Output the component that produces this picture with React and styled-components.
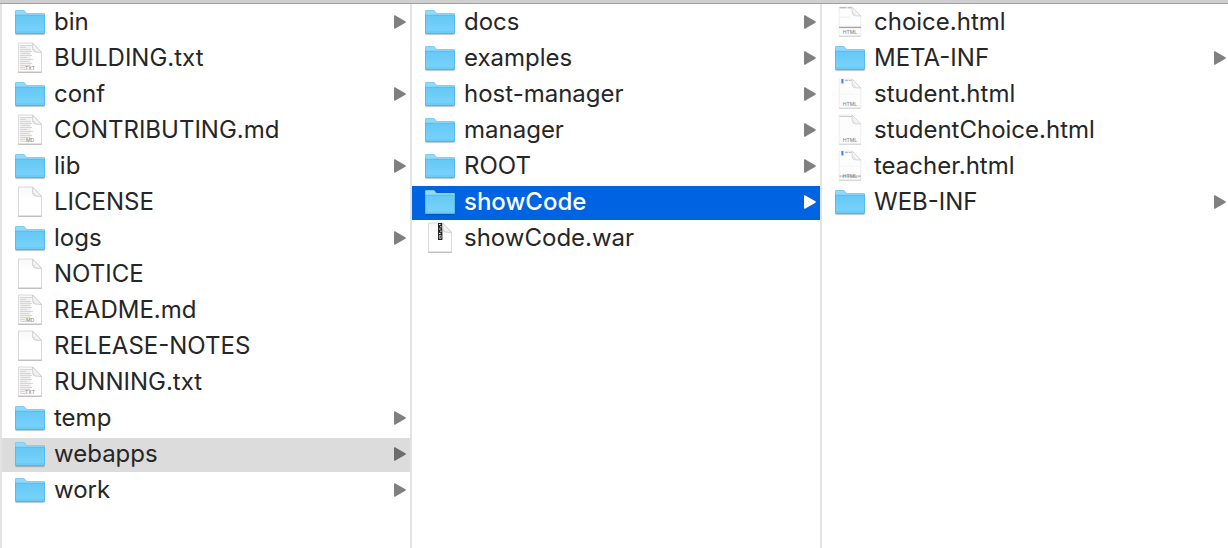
import React from "react";
import styled, { createGlobalStyle } from "styled-components";

const GlobalStyle = createGlobalStyle`
  * { box-sizing: border-box; }
  html, body, #root { height: 100%; }
  body {
    margin: 0;
    background: #fff;
    color: #262626;
    font-family: Inter, "Liberation Sans", sans-serif;
    overflow: hidden;
  }
`;

const Browser = styled.main`
  min-height: 100%;
  display: flex;
  flex-direction: column;
`;

const TopEdge = styled.div`
  height: 4px;
  flex: none;
  background: #cfcfcf;
  border-bottom: 1px solid #a0a0a0;
`;

const Columns = styled.div`
  flex: 1;
  display: grid;
  grid-template-columns: repeat(3, minmax(0, 1fr));
  margin-right: -2px;
`;

const Column = styled.ul`
  margin: 0;
  padding: 2px 0 0;
  list-style: none;
  border-left: 2px solid #e3e3e3;
  display: flex;
  flex-direction: column;
  gap: 2px;
`;

const rowColors = {
  active: { background: "#0063e1", color: "#fff", arrow: "#fff" },
  path: { background: "#dcdcdc", color: "#262626", arrow: "#6c6c6c" },
  none: { background: "transparent", color: "#262626", arrow: "#808080" },
};

const Row = styled.button`
  width: 100%;
  height: 34px;
  display: flex;
  align-items: center;
  gap: 9px;
  margin: 0;
  padding: 0 4px 2px 13px;
  border: 0;
  text-align: left;
  font: inherit;
  font-weight: ${({ $state }) => ($state === "active" ? 500 : 400)};
  background: ${({ $state }) => rowColors[$state].background};
  color: ${({ $state }) => rowColors[$state].color};
`;

const Name = styled.span`
  flex: 1;
  min-width: 0;
  font-size: 24px;
  line-height: 32px;
  white-space: nowrap;
`;

const Icon = styled.svg`
  width: 30px;
  height: 32px;
  flex: none;
  display: block;
`;

const ArrowIcon = styled.svg`
  width: 12px;
  height: 14px;
  flex: none;
  fill: ${({ $state }) => rowColors[$state].arrow};
`;

const Extension = styled.text`
  font-family: Inter, "Liberation Sans", sans-serif;
  font-size: 5px;
  font-weight: 500;
  fill: #8c8c8c;
  text-anchor: middle;
`;

const GradientDefs = styled.svg`
  display: block;
  width: 0;
  height: 0;
`;

function Gradients() {
  return (
    <GradientDefs aria-hidden="true">
      <defs>
        <linearGradient id="folder-front" x1="0" y1="0" x2="0" y2="1">
          <stop offset="0" stopColor="#66c8f6" />
          <stop offset="1" stopColor="#79d4fb" />
        </linearGradient>
        <linearGradient id="paper" x1="0" y1="0" x2="0" y2="1">
          <stop offset="0" stopColor="#f8f8f8" />
          <stop offset="0.4" stopColor="#fff" />
          <stop offset="1" stopColor="#fff" />
        </linearGradient>
        <linearGradient id="fold" x1="0" y1="1" x2="1" y2="0">
          <stop offset="0" stopColor="#dedede" />
          <stop offset="0.5" stopColor="#fafafa" />
        </linearGradient>
      </defs>
    </GradientDefs>
  );
}

function FolderIcon() {
  return (
    <Icon viewBox="0 0 30 32" aria-hidden="true">
      <path d="M.5 28.5h29" stroke="#000" strokeOpacity=".18" strokeWidth="1.4" />
      <path d="M0 27V5.2Q0 4 1.2 4H8.4Q9.4 4 10 5L10.8 6.3Q11.2 7 12.2 7H28.8Q30 7 30 8.2V27Z" fill="#74c9f0" />
      <path d="M.7 8.5V5.5Q.7 4.7 1.5 4.7H8.2Q9 4.7 9.5 5.6L10.2 6.8Q10.6 7.6 11.8 7.6H28.6Q29.3 7.6 29.3 8.5V10H.7Z" fill="#8fd9fb" />
      <path d="M0 9H30V26.8Q30 28 28.8 28H1.2Q0 28 0 26.8Z" fill="url(#folder-front)" />
      <path d="M0 9.2H30" stroke="#58b7e4" strokeWidth=".7" />
      <path d="M.4 9V27M29.6 9V27" stroke="#4fb3e2" strokeWidth=".8" />
      <path d="M.5 26H29.5" stroke="#57b9e7" strokeWidth=".6" />
      <path d="M.4 27.6H29.6" stroke="#48a7d5" strokeWidth=".8" />
    </Icon>
  );
}

const textLines = [
  "M5 3.5h12", "M5 5.5h6", "M5 7.5h11", "M5 9.5h12", "M6 11.5h9", "M5 13.5h12",
  "M5 15.5h7", "M5 17.5h13", "M5 19.5h9", "M5 21.5h12", "M5 23.5h10", "M5 25.5h5", "M5 27.5h6",
];

function PaperIcon({ kind }) {
  const label = { txt: "TXT", md: "MD" }[kind];
  return (
    <Icon viewBox="0 0 30 32" aria-hidden="true">
      <path d="M3.5 1H17.6L26.5 10.4V30H3.5Z" fill="url(#paper)" stroke="#d2d2d2" strokeWidth=".8" />
      <path d="M3.2 30.3H26.8" stroke="#b4b4b4" strokeWidth="1" />
      {label && (
        <>
          <path d="M4.5 3H16V27H4.5Z" fill="#f1f1f1" />
          <path d={textLines.join("")} stroke="#d6d6d6" strokeWidth="1" />
          <path d="M11 24H26V29H11Z" fill="#fff" fillOpacity=".85" />
          <Extension x="15" y="28">{label}</Extension>
        </>
      )}
      {kind === "war" && (
        <>
          <path d="M13 1H17.4V18H13Z" fill="#202224" />
          <path d="M14 2.6h1.6M15.2 4.8h1.4M14 7h1.6M15.2 9.2h1.4M14 11.4h1.6" stroke="#fff" strokeWidth="1" />
          <path d="M14.4 13.4H16V16.4H14.4Z" fill="none" stroke="#e8e8e8" strokeWidth=".7" />
        </>
      )}
      <path d="M17.6 1L17.8 7.2Q18 9.9 20.6 10.1L26.5 10.4Z" fill="url(#fold)" stroke="#c4c4c4" strokeWidth=".8" />
    </Icon>
  );
}

function HtmlIcon({ preview }) {
  return (
    <Icon viewBox="0 0 30 32" aria-hidden="true">
      <path d="M4.2 1H17L25.8 10V30H4.2Z" fill="#fdfdfd" stroke="#e6e6e6" strokeWidth=".7" />
      <path d="M4 30.3H26" stroke="#c8c8c8" strokeWidth=".8" />
      {preview === "rule" && (
        <>
          <path d="M4.5 1.8H17" stroke="#a2a2a2" strokeWidth="1" strokeDasharray="7 1 4 1" />
          <path d="M5 11.2H15" stroke="#eee" strokeWidth="1" />
          <path d="M4 21.4H26" stroke="#a5a5a5" strokeWidth="1.4" />
        </>
      )}
      {preview === "plain" && <path d="M4.5 2.4H17" stroke="#c5c5c5" strokeWidth="1" />}
      {(preview === "form" || preview === "table") && (
        <>
          <path d="M7.4 1V5.5" stroke="#3c82ea" strokeWidth="2" />
          <path d="M10 2.3H17" stroke="#a8a8a8" strokeWidth="1" strokeDasharray="3 .7 2 .7" />
          <path d="M5 16H25" stroke="#f4f4f4" strokeWidth=".8" />
        </>
      )}
      {preview === "table" && (
        <path d="M4.5 26.3H26" stroke="#9b9b9b" strokeWidth="2" strokeDasharray="1.5 .5 3 .4" strokeOpacity=".6" />
      )}
      <Extension x="15" y="28">HTML</Extension>
      <path d="M17 1L17.2 6.6Q17.4 9.6 20.2 9.8L25.8 10Z" fill="url(#fold)" stroke="#cfcfcf" strokeWidth=".8" />
    </Icon>
  );
}

function EntryIcon({ kind, preview }) {
  if (kind === "folder") return <FolderIcon />;
  if (kind === "html") return <HtmlIcon preview={preview} />;
  return <PaperIcon kind={kind} />;
}

const folder = (name, state = "none") => ({ name, kind: "folder", state });
const file = (name, kind = "blank", preview) => ({ name, kind, preview, state: "none" });

const columns = [
  {
    label: "Server folder",
    entries: [
      folder("bin"),
      file("BUILDING.txt", "txt"),
      folder("conf"),
      file("CONTRIBUTING.md", "md"),
      folder("lib"),
      file("LICENSE"),
      folder("logs"),
      file("NOTICE"),
      file("README.md", "md"),
      file("RELEASE-NOTES"),
      file("RUNNING.txt", "txt"),
      folder("temp"),
      folder("webapps", "path"),
      folder("work"),
    ],
  },
  {
    label: "webapps",
    entries: [
      folder("docs"),
      folder("examples"),
      folder("host-manager"),
      folder("manager"),
      folder("ROOT"),
      folder("showCode", "active"),
      file("showCode.war", "war"),
    ],
  },
  {
    label: "showCode",
    entries: [
      file("choice.html", "html", "rule"),
      folder("META-INF"),
      file("student.html", "html", "form"),
      file("studentChoice.html", "html", "plain"),
      file("teacher.html", "html", "table"),
      folder("WEB-INF"),
    ],
  },
];

function Entry({ name, kind, preview, state }) {
  return (
    <li>
      <Row type="button" $state={state} aria-current={state === "none" ? undefined : "true"}>
        <EntryIcon kind={kind} preview={preview} />
        <Name>{name}</Name>
        {kind === "folder" && (
          <ArrowIcon $state={state} viewBox="0 0 12 14" aria-hidden="true">
            <path d="M0 1Q0 0 1 .3L11.4 6.3Q12.3 7 11.4 7.7L1 13.7Q0 14 0 13Z" />
          </ArrowIcon>
        )}
      </Row>
    </li>
  );
}

export default function App() {
  return (
    <Browser>
      <GlobalStyle />
      <Gradients />
      <TopEdge />
      <Columns>
        {columns.map(({ label, entries }) => (
          <Column key={label} aria-label={label}>
            {entries.map((entry) => (
              <Entry key={entry.name} {...entry} />
            ))}
          </Column>
        ))}
      </Columns>
    </Browser>
  );
}
